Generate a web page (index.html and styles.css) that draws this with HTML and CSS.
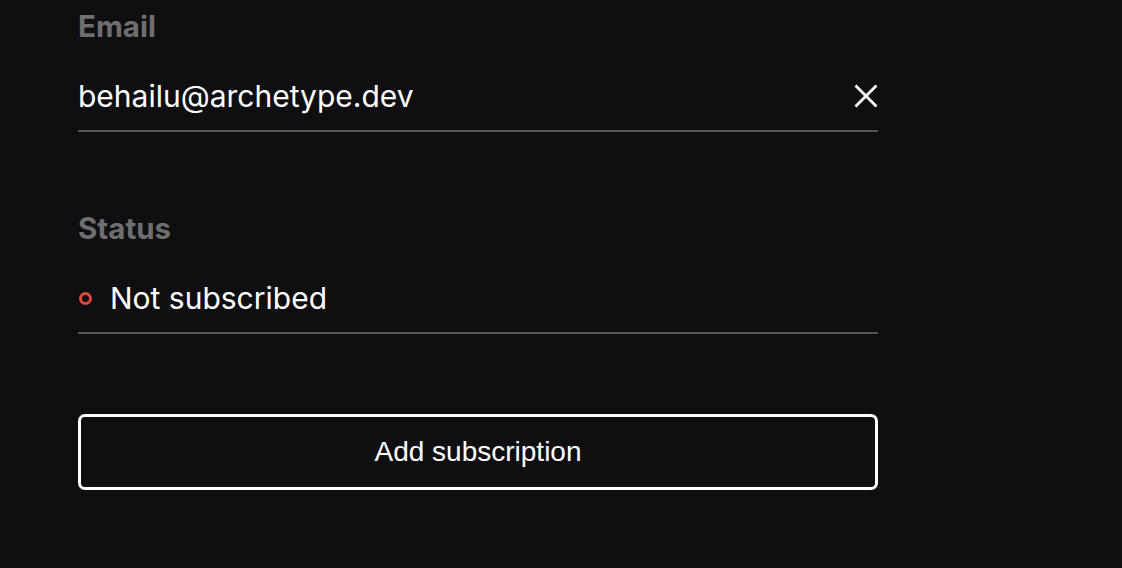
FILE: index.html
```html
<!DOCTYPE html>
<html>
<head>
<meta charset="utf-8">
<link rel="stylesheet" href="styles.css">
</head>
<body>
<div class="form">
  <div class="field">
    <div class="label">Email</div>
    <div class="value-row">
      <span class="value">behailu@archetype.dev</span>
      <svg class="clear" width="24" height="24" viewBox="0 0 24 24"><path d="M2.5 2.5 L21.5 21.5 M21.5 2.5 L2.5 21.5" stroke="#fff" stroke-width="2.8" stroke-linecap="square" fill="none"/></svg>
    </div>
  </div>
  <div class="field">
    <div class="label">Status</div>
    <div class="value-row status">
      <span class="dot"></span>
      <span class="value">Not subscribed</span>
    </div>
  </div>
  <button class="btn">Add subscription</button>
</div>
</body>
</html>
```
FILE: styles.css
```css
html, body {
  margin: 0;
  padding: 0;
  background: #0f0f11;
  height: 100%;
}
body {
  font-family: Inter, "Noto Sans", sans-serif;
  color: #fff;
}
.form {
  width: 800px;
  margin-left: 78px;
  padding-top: 8px;
  display: flex;
  flex-direction: column;
}
.field {
  margin-bottom: 78px;
}
.field + .field {
  margin-bottom: 80px;
}
.label {
  font-size: 29.5px;
  font-weight: 700;
  color: #6e6e70;
  line-height: 36px;
}
.value-row {
  display: flex;
  align-items: center;
  justify-content: space-between;
  padding-top: 34px;
  padding-bottom: 16px;
  height: 36px;
  border-bottom: 2px solid #565658;
}
.value {
  font-size: 30px;
  font-weight: 400;
  line-height: 36px;
}
.status {
  justify-content: flex-start;
  gap: 18px;
}
.dot {
  width: 7px;
  height: 7px;
  border: 3.5px solid #de4a3c;
  border-radius: 50%;
  margin-left: 1px;
}
.btn {
  height: 76px;
  border: 3px solid #fff;
  border-radius: 7px;
  background: transparent;
  color: #fff;
  font-family: "Liberation Sans", Arial, sans-serif;
  font-size: 28px;
  cursor: pointer;
}
```
